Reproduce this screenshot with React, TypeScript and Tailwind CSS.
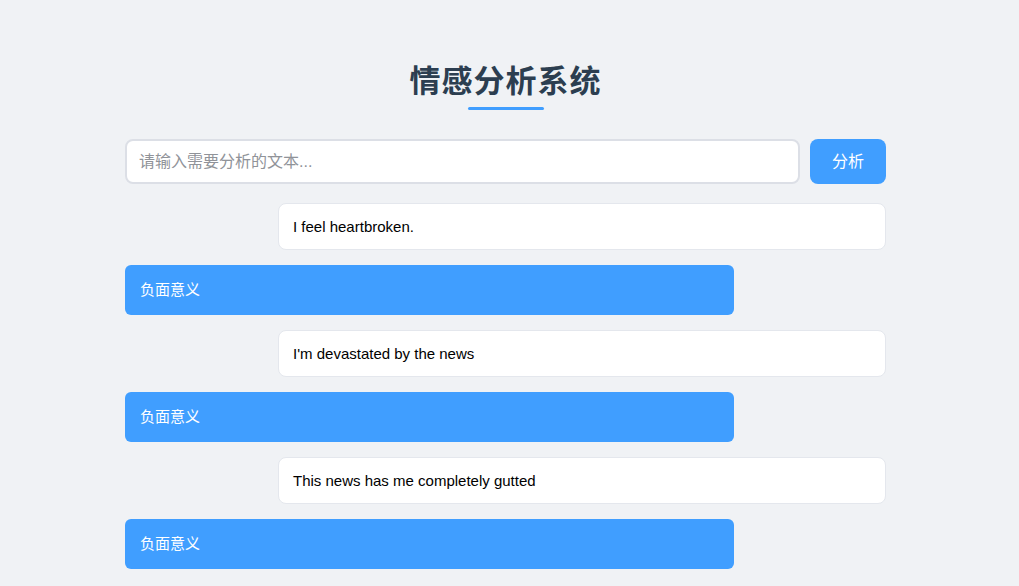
import React from "react";

const items = [
  { text: "I feel heartbroken.", result: "负面意义" },
  { text: "I'm devastated by the news", result: "负面意义" },
  { text: "This news has me completely gutted", result: "负面意义" },
];

export default function App() {
  return (
    <div
      className="min-h-screen bg-[#f0f2f5] pt-[59px] pb-10"
      style={{ fontFamily: '"Liberation Sans", "Noto Sans CJK SC", sans-serif' }}
    >
      <div className="ml-[125px] w-[761px]">
        <h1 className="text-center text-[31px] leading-[40px] font-bold text-[#2c3e50] tracking-[1px]" style={{ fontFamily: '"Noto Sans CJK SC", sans-serif' }}>
          情感分析系统
        </h1>
        <div className="mx-auto mt-[8px] h-[3px] w-[76px] rounded-full bg-[#409eff]" />
        <div className="mt-[29px] mb-[19px] flex gap-[10px]">
          <input
            className="h-[45px] flex-1 rounded-[8px] border-2 border-[#dcdfe6] bg-white px-[12px] text-[16px] text-[#333] outline-none placeholder:text-[#909399]"
            placeholder="请输入需要分析的文本..."
          />
          <button className="h-[45px] w-[76px] rounded-[8px] bg-[#409eff] text-[16px] text-white">
            分析
          </button>
        </div>
        <div className="flex flex-col gap-[15px]">
          {items.map((it, i) => (
            <React.Fragment key={i}>
              <div className="ml-auto flex h-[47px] w-[608px] items-center rounded-[8px] border border-[#e4e7ed] bg-white px-[14px] pt-[1px] text-[15px] text-black">
                {it.text}
              </div>
              <div className="flex h-[50px] w-[609px] items-center rounded-[6px] bg-[#409eff] px-[15px] pt-[1px] text-[15px] text-white">
                {it.result}
              </div>
            </React.Fragment>
          ))}
        </div>
      </div>
    </div>
  );
}
